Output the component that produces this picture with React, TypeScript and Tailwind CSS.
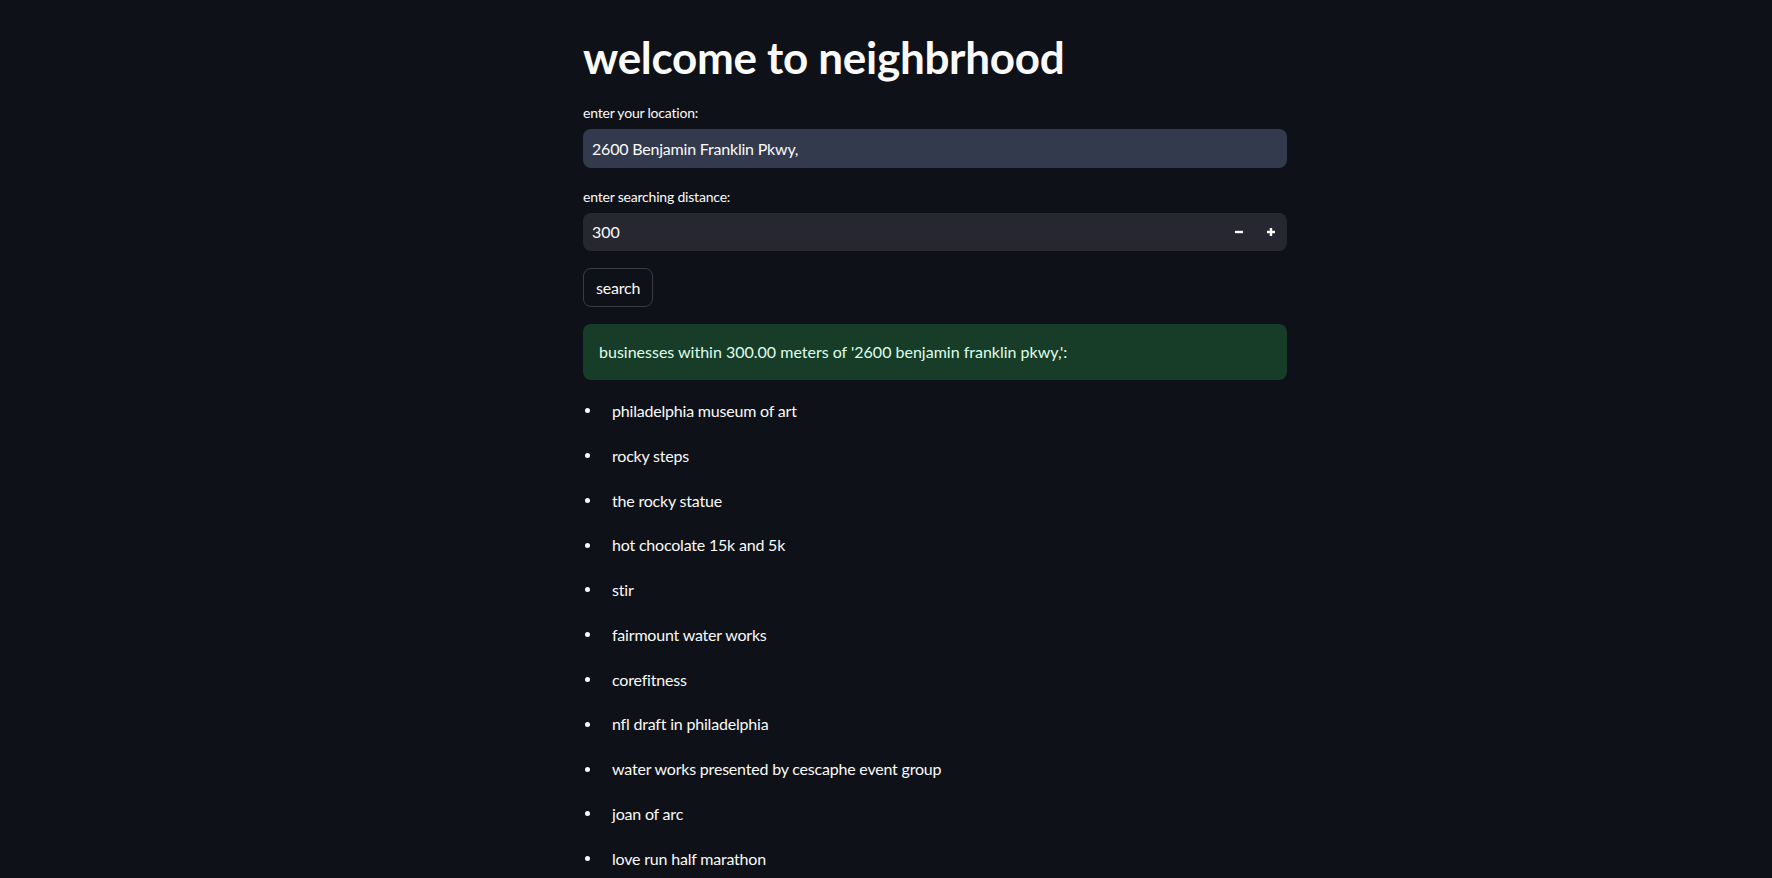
import React from 'react';

const PLACES = [
  'philadelphia museum of art',
  'rocky steps',
  'the rocky statue',
  'hot chocolate 15k and 5k',
  'stir',
  'fairmount water works',
  'corefitness',
  'nfl draft in philadelphia',
  'water works presented by cescaphe event group',
  'joan of arc',
  'love run half marathon',
];

const App: React.FC = () => {
  return (
    <div
      className="min-h-screen bg-[#0e1117] text-[#fafafa] pl-[583px] pt-[31px] pb-24"
      style={{ fontFamily: 'Lato, "Open Sans", sans-serif' }}
    >
      <div className="w-[704px] flex flex-col">
        <h1 className="text-[44px] font-bold leading-[52px] tracking-[-0.3px]">welcome to neighbrhood</h1>

        <label className="mt-[18px] text-[14px] leading-[24px] tracking-[-0.2px]">enter your location:</label>
        <div className="mt-[4px] h-[39px] rounded-lg bg-[#343a4d] flex items-center pl-[9px] text-[16px] tracking-[-0.2px]">
          2600 Benjamin Franklin Pkwy,
        </div>

        <label className="mt-[17px] text-[14px] leading-[24px] tracking-[-0.2px]">enter searching distance:</label>
        <div className="mt-[4px] h-[38px] rounded-lg bg-[#262730] flex items-center text-[16px]">
          <span className="flex-1 pl-[9px]">300</span>
          <button className="w-[32px] h-full flex items-center justify-center">
            <svg width="10" height="10" viewBox="0 0 10 10">
              <path d="M1 5h8" stroke="#fafafa" strokeWidth="2.4" />
            </svg>
          </button>
          <button className="w-[32px] h-full flex items-center justify-center">
            <svg width="10" height="10" viewBox="0 0 10 10">
              <path d="M1 5h8M5 1v8" stroke="#fafafa" strokeWidth="2.4" />
            </svg>
          </button>
        </div>

        <div className="mt-[17px]">
          <button className="h-[39px] px-[12px] rounded-lg border border-[#3b3d45] text-[16px] tracking-[-0.2px]">
            search
          </button>
        </div>

        <div className="mt-[17px] h-[56px] rounded-lg bg-[#173d29] text-[#dffde9] flex items-center px-[16px] text-[16px]">
          businesses within 300.00 meters of '2600 benjamin franklin pkwy,':
        </div>

        <ul className="mt-[18px] flex flex-col gap-[19.2px]">
          {PLACES.map((p) => (
            <li key={p} className="flex items-center leading-[25.6px] text-[16px] tracking-[-0.2px]">
              <span className="ml-[2px] w-[5px] h-[5px] rounded-full bg-[#fafafa]" />
              <span className="ml-[22px]">{p}</span>
            </li>
          ))}
        </ul>
      </div>
    </div>
  );
};

export default App;
